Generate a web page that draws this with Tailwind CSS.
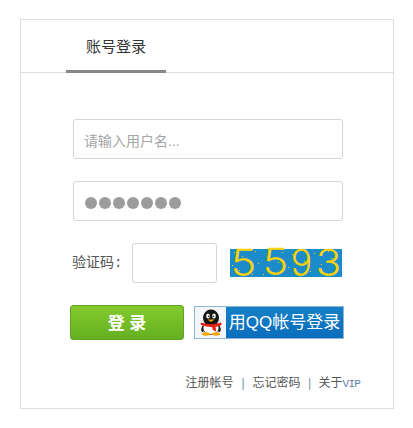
<!DOCTYPE html>
<html lang="zh-CN">
<head>
  <meta charset="UTF-8">
  <meta name="viewport" content="width=device-width, initial-scale=1.0">
  <title>账号登录</title>
  <script src="https://cdn.jsdelivr.net/npm/@tailwindcss/browser@4"></script>
</head>
<body class="bg-white font-['Liberation_Sans','Noto_Sans_CJK_SC',sans-serif] text-[#333]">
  <div class="pt-[19px] pl-[20px]">
    <div class="w-[374px] h-[390px] border border-[#ddd] bg-white">
      <!-- Tab -->
      <div class="h-[53px] border-b border-[#ddd] pl-[45px]">
        <div class="w-[100px] h-[53px] border-b-[3px] border-[#888] text-center text-[15px] leading-[53px] text-[#333]">账号登录</div>
      </div>

      <!-- Form -->
      <div class="pl-[52px] pt-[46px]">
        <input type="text" placeholder="请输入用户名..." class="block w-[270px] h-[40px] border border-[#d5d5d5] rounded-[3px] px-[10px] pt-[4px] text-[14px] outline-none placeholder:text-[#a5a5a5]">
        <div class="flex items-center gap-[2px] w-[270px] h-[40px] mt-[22px] border border-[#d5d5d5] rounded-[3px] pl-[11px] pt-[3px]">
          <span class="w-[12px] h-[12px] rounded-full bg-[#9c9c9c]"></span>
          <span class="w-[12px] h-[12px] rounded-full bg-[#9c9c9c]"></span>
          <span class="w-[12px] h-[12px] rounded-full bg-[#9c9c9c]"></span>
          <span class="w-[12px] h-[12px] rounded-full bg-[#9c9c9c]"></span>
          <span class="w-[12px] h-[12px] rounded-full bg-[#9c9c9c]"></span>
          <span class="w-[12px] h-[12px] rounded-full bg-[#9c9c9c]"></span>
          <span class="w-[12px] h-[12px] rounded-full bg-[#9c9c9c]"></span>
        </div>

        <!-- Captcha row -->
        <div class="flex items-center mt-[22px] -ml-[1px] h-[40px]">
          <label class="w-[60px] font-['Liberation_Mono','Noto_Sans_CJK_SC',monospace] text-[14px] text-[#555]">验证码:</label>
          <input type="text" class="block w-[85px] h-[40px] border border-[#d5d5d5] rounded-[3px] outline-none">
          <svg class="ml-[13px] overflow-visible" width="112" height="28" viewBox="0 0 112 28">
            <rect width="112" height="28" fill="#1b8bc9"/>
            <g fill="#ffd400" stroke="#ffd400" stroke-width=".7" font-family="Inter, sans-serif" font-weight="200" font-size="35">
              <text x="1" y="26" textLength="25" lengthAdjust="spacingAndGlyphs">5</text>
              <text x="33" y="25" textLength="25" lengthAdjust="spacingAndGlyphs">5</text>
              <text x="61" y="26" textLength="21" lengthAdjust="spacingAndGlyphs">9</text>
              <text x="86" y="26" textLength="25" lengthAdjust="spacingAndGlyphs">3</text>
            </g>
            <g fill="#ffd400">
              <rect x="4" y="3" width="1" height="1"/><rect x="12" y="7" width="1" height="1"/><rect x="25" y="2" width="1" height="1"/>
              <rect x="28" y="14" width="1" height="1"/><rect x="9" y="21" width="1" height="1"/><rect x="17" y="12" width="1" height="1"/>
              <rect x="38" y="6" width="1" height="1"/><rect x="43" y="23" width="1" height="1"/><rect x="52" y="3" width="1" height="1"/>
              <rect x="58" y="18" width="1" height="1"/><rect x="62" y="5" width="1" height="1"/><rect x="67" y="1" width="1" height="1"/>
              <rect x="74" y="12" width="1" height="1"/><rect x="80" y="22" width="1" height="1"/><rect x="84" y="4" width="1" height="1"/>
              <rect x="91" y="15" width="1" height="1"/><rect x="98" y="2" width="1" height="1"/><rect x="106" y="20" width="1" height="1"/>
              <rect x="2" y="16" width="1" height="1"/><rect x="33" y="25" width="1" height="1"/><rect x="48" y="13" width="1" height="1"/>
              <rect x="70" y="25" width="1" height="1"/><rect x="101" y="9" width="1" height="1"/><rect x="22" y="25" width="1" height="1"/>
            </g>
          </svg>
        </div>

        <!-- Buttons -->
        <div class="flex items-center mt-[22px] -ml-[3px]">
          <button class="w-[114px] h-[35px] rounded-[3px] border border-[#5fa320] bg-gradient-to-b from-[#85cb2f] to-[#64b021] text-[17px] font-bold leading-[35px] text-white">登 录</button>
          <a href="#" class="flex ml-[10px] w-[150px] h-[33px] border border-[#8fb6d6] bg-gradient-to-b from-[#1580c8] to-[#0a6dbb]">
            <span class="flex items-center justify-center w-[31px] bg-[#f3f7fb]">
              <svg width="26" height="27" viewBox="0 0 26 27">
                <path d="M5 16 q-3 4 -1 7 l3-1z M21 16 q3 4 1 7 l-3-1z" fill="#161616"/>
                <ellipse cx="13" cy="19" rx="8" ry="6.500" fill="#fff" stroke="#333" stroke-width=".8"/>
                <ellipse cx="13" cy="9" rx="8" ry="8.500" fill="#161616"/>
                <ellipse cx="10" cy="7" rx="1.800" ry="2.500" fill="#fff"/>
                <ellipse cx="16" cy="7" rx="1.800" ry="2.500" fill="#fff"/>
                <circle cx="10.500" cy="7.200" r=".8" fill="#111"/>
                <circle cx="15.500" cy="7.200" r=".8" fill="#111"/>
                <path d="M9.500 10.500 h7 l-3.500 2.500z" fill="#f7a600"/>
                <path d="M3 13.500 q10 3.500 20 0 l.8 2.300 q-3 1.700 -6.300 2.200 l.8 4.500 l-3.300-1.200 l-1-3.300 q-6 0 -11.300-2.200z" fill="#e3231a"/>
                <ellipse cx="8" cy="25" rx="4.200" ry="1.700" fill="#f7a600"/>
                <ellipse cx="18" cy="25" rx="4.200" ry="1.700" fill="#f7a600"/>
              </svg>
            </span>
            <span class="flex-1 text-center text-[17px] leading-[31px] text-white whitespace-nowrap">用QQ帐号登录</span>
          </a>
        </div>
      </div>

      <!-- Links -->
      <div class="flex justify-end items-center mt-[34px] pr-[33px] text-[12px] text-[#555]">
        <a href="#">注册帐号</a>
        <span class="w-[19px] text-center text-[#6f9aa5]">|</span>
        <a href="#">忘记密码</a>
        <span class="w-[18px] text-center text-[#6f9aa5]">|</span>
        <a href="#">关于<span class="font-['Liberation_Mono',monospace] text-[11px] tracking-[-0.8px] text-[#5f80ab]">VIP</span></a>
      </div>
    </div>
  </div>
</body>
</html>
